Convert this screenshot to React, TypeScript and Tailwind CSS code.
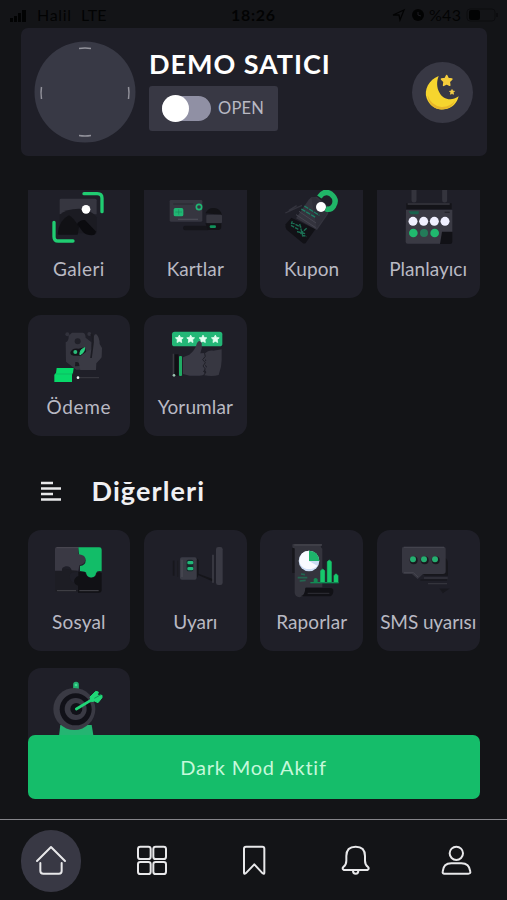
import type { ReactNode } from 'react';

const STAR = 'M0 -10 L3 -4 L10 -3 L5 2 L6 9 L0 6 L-6 9 L-5 2 L-10 -3 L-3 -4 Z';

function Tile({ label, view, track, children }: { label?: string; view: string; track?: string; children: ReactNode }) {
  return (
    <div className="flex h-[121px] flex-col items-center rounded-[13px] bg-[#1f1f28]">
      <svg className="h-20 w-[103px] shrink-0" viewBox={view}>{children}</svg>
      {label && <span className={`text-[19px] leading-6 whitespace-nowrap text-[#b9b9c3] ${track}`}>{label}</span>}
    </div>
  );
}

function Gallery() {
  return (
    <Tile label="Galeri" view="24 -9 309 240" track="tracking-[0.4px]">
      <path d="M126 56h102q5 0 5 5v42H122V60q0-4 4-4Z" fill="#363640" />
      <path d="M122 104q18-18 58-18 34 0 53 26v48l-50 0-61 0Z" fill="#1b1b22" />
      <path d="M116 162q4-42 34-56 12 6 30 34l-4 24h-56q-4 0-4-2Z" fill="#111115" />
      <path d="M174 132q10-14 24-12l32 34q2 12-12 12-16 0-26-10Z" fill="#0b0b0f" />
      <circle cx="201" cy="88" r="13" fill="#fff" />
      <path d="M195 41h40q14 0 14 14v40M105 127v43q0 13 13 13h44" fill="none" stroke="#20cd72" strokeWidth="10" strokeLinecap="round" />
    </Tile>
  );
}

function Cards() {
  return (
    <Tile label="Kartlar" view="372 -9 309 240" track="tracking-[0.1px]">
      <rect x="449" y="60" width="98" height="65" rx="4" fill="#363640" />
      <path d="M460 72h60" stroke="#2a2a33" strokeWidth="4" />
      <path d="M474 118h60" stroke="#4b4b55" strokeWidth="4" />
      <rect x="461" y="84" width="29" height="25" rx="5" fill="#20b673" />
      <path d="M476 88v16M466 96h20" stroke="#1a8a5a" strokeWidth="2" />
      <circle cx="537" cy="81" r="8" fill="none" stroke="#20b673" strokeWidth="5" />
      <path d="M556 100q10-18 26-16 18 1 24 20Z" fill="#131317" />
      <rect x="559" y="104" width="47" height="26" rx="4" fill="#36363f" />
      <path d="M496 144h66" stroke="#15151a" strokeWidth="14" strokeLinecap="round" />
      <path d="M556 130h48v10q0 10-12 10h-28Z" fill="#131317" />
      <rect x="569" y="136" width="19" height="8" rx="4" fill="#12925c" />
    </Tile>
  );
}

function Coupon() {
  return (
    <Tile label="Kupon" view="18 -9 309 240" track="tracking-[0.1px]">
      <path d="M94 99l50-23M104 92l24-15" stroke="#34343e" strokeWidth="4" />
      <path d="M95 133l17-20 72 35-29 41q-4 3-9 0l-48-40q-6-6-3-16Z" fill="#111116" />
      <path d="M172 52l17-2 37 33-4 19-33 48-63-35 38-56Z" fill="#34343e" />
      <path d="M172 52l12 0 37 36-5 18-28 38Z" fill="#2e2e38" />
      <path d="M135 94l51 35M126 104l59 39" stroke="#454550" strokeWidth="3" />
      <path d="M151 78l45 28M142 87l44 26" stroke="#1d8065" strokeWidth="4" strokeDasharray="14 3" />
      <circle cx="201" cy="81" r="15" fill="#fff" />
      <path d="M196 51q15-22 35-9 20 16 8 36-9 14-24 8" fill="none" stroke="#20b568" strokeWidth="16" />
      <path d="M112 127l30 15M111 136l24 13M137 132l10 39M129 155l25 6M115 124l-3 8M158 145l-21 18M144 165l14 5" stroke="#1b7054" strokeWidth="4" strokeDasharray="11 3" />
    </Tile>
  );
}

function Planner() {
  return (
    <Tile label="Planlayıcı" view="366 -9 309 240" track="tracking-[0.02px]">
      <path d="M477 20v40M569 20v40" stroke="#34343d" strokeWidth="15" strokeLinecap="round" />
      <path d="M454 87V70h136v17Z" fill="#141419" /><path d="M458 72h126" stroke="#383841" strokeWidth="5" />
      <path d="M453 90h139v65l-34 36H458q-6 0-6-6Z" fill="#3a3a44" />
      <path d="M561 155h31v31q0 6-7 6h-30Z" fill="#111116" />
      <path d="M461 94h31l-2 9h-23Z" fill="#18624e" /><path d="M569 97h15" stroke="#25252c" strokeWidth="4" />
      {[474, 506, 538, 570].map(x => <circle key={x} cx={x} cy="124" r="13.5" fill="#f0f0ff" />)}
      <circle cx="475" cy="159" r="13" fill="#20b96e" /><circle cx="507" cy="159" r="12" fill="#237b59" /><circle cx="539" cy="159" r="13" fill="#20b96e" />
    </Tile>
  );
}

function Payment() {
  return (
    <Tile label="Ödeme" view="24 30 309 240" track="tracking-[0.7px]">
      <path d="M140 112q10-4 9-20l10-9h32q8 0 9 15l17 14 1 68-23 14h-23l-31-24Z" fill="#35353f" />
      <circle cx="176" cy="109" r="9" fill="#202028" />
      <circle cx="145" cy="88" r="6" fill="#32323c" /><circle cx="211" cy="87" r="6" fill="#32323c" />
      <path d="M154 142q6-15 25-11l16-4q10 8 3 25h-34q-10 0-10-10Z" fill="#14141a" />
      <path d="M169 171q13-2 15 12l-16 1Z" fill="#191920" />
      <path d="M217 133l8-39q1-8 7-6 10 10 10 29l7 12-1 28q-6 8-16 18l-1 20h-47l-6-28 10-17q15-13 29-17Z" fill="#3a3a44" />
      <path d="M216 86q9 12 5 35l-5 38" fill="none" stroke="#1c1c23" strokeWidth="5" />
      <circle cx="169" cy="141" r="6" fill="#2abb79" /><path d="M183 150q-2-16 14-22 1 14-14 22Z" fill="#2ad07f" stroke="#2ad07f" strokeWidth="3" />
      <path d="M113 189h51l-2 14-3 5v23h-53v-22l5-5Z" fill="#08d96a" /><path d="M110 207h50" stroke="#0cbb62" strokeWidth="3" />
      <path d="M178 218h62" stroke="#3b3b42" strokeWidth="3" /><circle cx="177" cy="218" r="4" fill="#f3f3f5" />
    </Tile>
  );
}

function Reviews() {
  return (
    <Tile label="Yorumlar" view="372 30 309 240" track="tracking-[0.1px]">
      <rect x="456" y="80" width="151" height="44" rx="8" fill="#23b777" />
      {[478, 512, 549, 586].map(x => <path key={x} d={STAR} transform={`translate(${x} 102) scale(1.17)`} fill="#e1fff1" stroke="#e1fff1" strokeWidth="2" strokeLinejoin="round" />)}
      <path d="M489 157l19-8q17-12 23-35 7-12 14-1 3 15-4 32l18-1 4 12-9 9 8 10-7 6 4 9-7 5 1 12q-3 5-14 5h-30l-20-5Z" fill="#3a3a45" />
      <path d="M553 147q12-12 27-10l25-4v32l-2 20-7 25q-18 5-43 1l6-9-5-9 7-8-9-10 7-9-8-8Z" fill="#373741" />
      <path d="M553 142l3 12-8 10 8 9-7 10 7 9-6 9" stroke="#202028" strokeWidth="3" fill="none" />
      <path d="M460 146v65" stroke="#39393f" strokeWidth="4" /><path d="M470 148v64" stroke="#101014" strokeWidth="11" />
      <rect x="477" y="153" width="9" height="60" rx="3" fill="#20ac64" /><circle cx="462" cy="211" r="4" fill="#9cc5b3" />
    </Tile>
  );
}

function Social() {
  return (
    <Tile label="Sosyal" view="24 30 309 240" track="tracking-[0.2px]">
      <path d="M108 145v65q0 6 7 6h66v-28l-8-2q-20 3-21-16 1-16 20-13l3-8Z" fill="#1d1d24" />
      <path d="M113 81h65v21q19-3 21 16-1 16-18 18l-3 16-20-1q-4-14-18-12-13 3-11 13h-21V86q0-5 5-5Z" fill="#3a3944" />
      <path d="M113 83h65" stroke="#4b4953" strokeWidth="3" />
      <path d="M178 82h63q7 0 7 7v65q-14-4-17 6-2 13-15 13-14-1-15-16l-18-4v-15q17-1 17-17t-20-18Z" fill="#12bd68" />
      <path d="M178 155l19 0q8 22 22 18 13-1 14-14 7-5 15 0v50q0 9-8 9h-63v-21l-8-4q-8-12 1-20 5-5 8-4Z" fill="#111115" />
      <path d="M114 212h57M181 212h58" stroke="#45454b" strokeWidth="3" />
    </Tile>
  );
}

function Alert() {
  return (
    <Tile label="Uyarı" view="372 30 309 240" track="tracking-[-0.1px]">
      <path d="M461 122v45" stroke="#17171c" strokeWidth="5" />
      <path d="M473 122v48" stroke="#1b1b21" strokeWidth="4" />
      <path d="M530 115l6 5v45l-6 10ZM536 161l44 17v7l-44-19Z" fill="#15151a" />
      <path d="M486 112h38q6 0 6 6v55q0 6-6 6h-38q-6 0-6-6v-55q0-6 6-6Z" fill="#3a3b45" />
      <path d="M486 119v52" stroke="#4a4a54" strokeWidth="4" />
      <rect x="500" y="119" width="20" height="35" rx="5" fill="#17272a" />
      <rect x="502" y="123" width="18" height="10" rx="4" fill="#20b878" /><rect x="502" y="141" width="18" height="10" rx="4" fill="#20b878" />
      <path d="M579 104v84" stroke="#44444d" strokeWidth="4" /><rect x="588" y="81" width="20" height="114" rx="7" fill="#3a3a44" />
    </Tile>
  );
}

function Reports() {
  return (
    <Tile label="Raporlar" view="15 30 309 240" track="tracking-[0.05px]">
      <path d="M113 72h88q-8 7 1 14v116h-50q1 29-18 30-15-1-15-15V88q-10-5-6-16Z" fill="#34343d" />
      <path d="M115 84v75" stroke="#16161b" strokeWidth="7" /><path d="M118 75h83" stroke="#46464e" strokeWidth="4" />
      <path d="M151 204h75q9 0 9 8 0 13-9 17h-90q14-2 15-25Z" fill="#111116" /><path d="M158 220h65" stroke="#303037" strokeWidth="3" />
      <circle cx="162" cy="123" r="31" fill="#cbdcf4" /><path d="M162 123L188 138Q176 149 155 147q-19-4-22-24 1-30 29-31Z" fill="#f8faff" /><path d="M162 92q28 0 31 31h-31Z" fill="#1db46b" />
      <path d="M128 173h29M138 162l12 2M134 183l18-2" stroke="#236650" strokeWidth="5" />
      <path d="M176 187v-9q5-8 12 0v9" fill="#138a52" /><path d="M197 187v-35q6-9 12 0v35M217 187v-62q6-9 12 0v62M237 187v-20q6-10 12 0v20" fill="#16c96c" stroke="#16c96c" strokeWidth="2" /><path d="M166 188h85" stroke="#128a55" strokeWidth="4" />
    </Tile>
  );
}

function Sms() {
  return (
    <Tile label="SMS uyarısı" view="366 30 309 240" track="tracking-[-0.1px]">
      <path d="M570 115q9 2 9 17v35h-70l-7-9 60-8Z" fill="#17171c" />
      <path d="M496 180h80M558 208l6 8 12-8Z" stroke="#18181e" strokeWidth="5" fill="#18181e" />
      <path d="M446 80h120q6 0 6 7v67q0 8-8 8h-60l-16 15-17-15h-22q-8 0-8-8V86q0-6 5-6Z" fill="#363640" />
      <path d="M447 82h120M447 158h28l14 13" fill="none" stroke="#464650" strokeWidth="3" />
      {[474, 507, 540].map(x => <g key={x}><circle cx={x + 2} cy="121" r="12" fill="#19191e" /><circle cx={x} cy="118" r="9" fill="#25ae70" /></g>)}
      <path d="M507 174h71M519 191h57" stroke="#34343c" strokeWidth="4" />
    </Tile>
  );
}

function Target() {
  return (
    <Tile view="24 24 309 240">
      <path d="M124 195h94l5 30v20H120v-17Z" fill="#24b572" />
      <path d="M171 74v12" stroke="#23af70" strokeWidth="17" strokeLinecap="round" /><circle cx="171" cy="75" r="4" fill="#40dd94" />
      <circle cx="166" cy="147" r="63" fill="#3a3a44" /><circle cx="170" cy="148" r="48" fill="#111118" /><circle cx="170" cy="147" r="33" fill="#3a3a44" /><circle cx="172" cy="147" r="18" fill="#111118" />
      <path d="M172 147l57-34" stroke="#20d777" strokeWidth="8" strokeLinecap="round" />
      <path d="M213 111l17-17 8 2-3 10 14 0 0 7-12 15-11-5-8 2Z" fill="#20d777" stroke="#20d777" strokeWidth="3" /><path d="M226 115l20-11" stroke="#139458" strokeWidth="3" />
    </Tile>
  );
}

function StatusBar() {
  return (
    <div className="flex h-7 items-center pt-px pr-1 pl-[9px] text-base text-black/85">
      <svg className="h-3.5 w-4.5" viewBox="0 0 18 14"><path d="M1 10h3v4H1zM5 8h3v6H5zM9 5h3v9H9zM13 2h4v12h-4z" fill="currentColor" /></svg>
      <span className="ml-2.5 w-11 tracking-[0.7px]">Halil</span><span className="w-[150px]">LTE</span>
      <span className="w-[161px] font-bold tracking-[0.7px]">18:26</span>
      <svg className="h-3.5 w-3.5" viewBox="0 0 14 14"><path d="M1 7 12 2 8 12 7 7Z" fill="none" stroke="currentColor" strokeWidth="1.3" /></svg>
      <svg className="ml-[5px] h-3.5 w-3.5" viewBox="0 0 14 14"><circle cx="7" cy="7" r="6" fill="currentColor" /><path d="M7 4v3l3 1" fill="none" stroke="#1c1c22" /></svg>
      <span className="ml-1 w-9 tracking-[0.3px]">%43</span>
      <svg className="ml-px h-3.5 w-[33px]" viewBox="0 0 33 14"><rect x="1" y="1" width="28" height="12" rx="3" fill="none" stroke="#0c0c0f" /><rect x="3" y="2" width="11" height="10" rx="2" fill="currentColor" /><path d="M31 5v4" stroke="#0c0c0f" strokeWidth="2" /></svg>
    </div>
  );
}

function Header() {
  return (
    <header className="mr-5 ml-[21px] flex h-32 items-center rounded-[7px] bg-[#1f1f28] pr-[14px] pl-[13px]">
      <svg className="h-[102px] w-[102px]" viewBox="0 0 102 102"><circle cx="51" cy="51" r="50.5" fill="#383945" /><path d="M45 7.5q6-1 12 0M45 94.5q6 1 12 0M7.5 46q-1 5 0 12M94.500 46q1 5 0 12" fill="none" stroke="#92929b" strokeWidth="1.5" /></svg>
      <div className="ml-[13px] flex h-[106px] flex-col">
        <h1 className="h-[47px] text-[27px] leading-[50px] font-bold tracking-[0.95px] whitespace-nowrap text-white">DEMO SATICI</h1>
        <div className="flex h-[45px] w-[129px] items-center rounded-[3px] bg-[#383844] pl-[13px]">
          <span className="flex h-[25px] w-[49px] items-center rounded-full bg-[#9090a4]"><span className="h-[27px] w-[27px] shrink-0 rounded-full bg-white" /></span>
          <span className="ml-[7px] text-[16.5px] tracking-[0.2px] text-[#b9b9c3]">OPEN</span>
        </div>
      </div>
      <div className="ml-auto flex h-[61px] w-[61px] items-center justify-center rounded-full bg-[#383844]">
        <svg className="h-[61px] w-[61px]" viewBox="474 184 183 183"><path d="M554 226c-29 11-45 41-36 67 9 25 31 37 54 33 23-3 37-19 42-39-24 18-49 6-57-10-10-17-9-36-3-51Z" fill="#f6d52e" /><path d="M521 284q10 31 41 35 28 1 42-20-10 25-38 27c-26 2-43-16-45-42Z" fill="#e7b529" /><path d={STAR} transform="translate(578 240) scale(1.55)" fill="#f6ce3c" stroke="#f6ce3c" strokeWidth="3" strokeLinejoin="round" /><path d={STAR} transform="translate(594 274) scale(.75)" fill="#f3cd47" stroke="#f3cd47" strokeWidth="3" strokeLinejoin="round" /></svg>
      </div>
    </header>
  );
}

const navIcons = [
  <path d="M112 181l42-42 42 42M122 187v24q0 8 9 8h47q8 0 8-8v-24" />,
  <><rect x="416" y="138" width="38" height="37" rx="7" /><rect x="462" y="138" width="38" height="37" rx="7" /><rect x="416" y="184" width="38" height="36" rx="7" /><rect x="462" y="184" width="38" height="36" rx="7" /></>,
  <path d="M732 216v-72q0-6 6-6h49q6 0 6 6v72q0 6-5 2l-25-27-26 27q-5 4-5-2Z" />,
  <><path d="M1031 208h70q7-3 2-9-9-7-9-19v-14q0-28-28-28t-28 28v14q0 12-9 19-5 6 2 9ZM1058 210q0 9 8 9t8-9" /></>,
  <><circle cx="1369" cy="158" r="20" /><path d="M1333 219q-6 0-5-6 2-25 26-25h30q24 0 27 25 1 6-6 6Z" /></>,
];
const navViews = ['64 88 180 180', '368 88 180 180', '672 88 180 180', '974 88 180 180', '1278 88 180 180'];

function BottomNav() {
  return (
    <nav className="flex h-[81px] justify-between border-t border-[#85858a] px-[21px] pt-[10px]">
      {navIcons.map((icon, i) => (
        <div key={i} className={`flex h-[62px] w-[60px] justify-center rounded-full ${i === 0 ? 'bg-[#383844]' : ''}`}>
          <svg className="h-[60px] w-[60px]" viewBox={navViews[i]} fill="none" stroke="#e8e8ea" strokeWidth="6" strokeLinecap="round" strokeLinejoin="round">{icon}</svg>
        </div>
      ))}
    </nav>
  );
}

export default function App() {
  return (
    <div className="flex h-[900px] w-[507px] flex-col overflow-hidden bg-[#131417] font-['Lato','Liberation_Sans',sans-serif]">
      <StatusBar />
      <Header />
      <main className="mt-[34px] h-[555px] shrink-0 overflow-hidden px-[27.5px]">
        <section className="-mt-[13px] grid grid-cols-4 gap-x-[13.7px] gap-y-[17px]">
          <Gallery /><Cards /><Coupon /><Planner /><Payment /><Reviews />
        </section>
        <div className="flex h-[94px] items-center pt-[16px] pl-[13px]">
          <svg className="h-[20px] w-5" viewBox="0 0 20 20"><path d="M0 2h12M0 7.5h20M0 13h12M0 18.5h20" stroke="#e8e8ea" strokeWidth="2.7" /></svg>
          <h2 className="ml-[31px] text-[27px] leading-8 font-bold tracking-[1.1px] text-[#f0f0f2]">Diğerleri</h2>
        </div>
        <section className="grid grid-cols-4 gap-x-[13.7px] gap-y-[17px]">
          <Social /><Alert /><Reports /><Sms /><Target />
        </section>
      </main>
      <button className="relative mx-[27.5px] -mt-[10px] h-[64px] shrink-0 rounded-[7px] bg-[#15bd6a] text-[20px] tracking-[0.8px] text-[#c5f8da]">Dark Mod Aktif</button>
      <div className="h-5 shrink-0" />
      <BottomNav />
    </div>
  );
}
